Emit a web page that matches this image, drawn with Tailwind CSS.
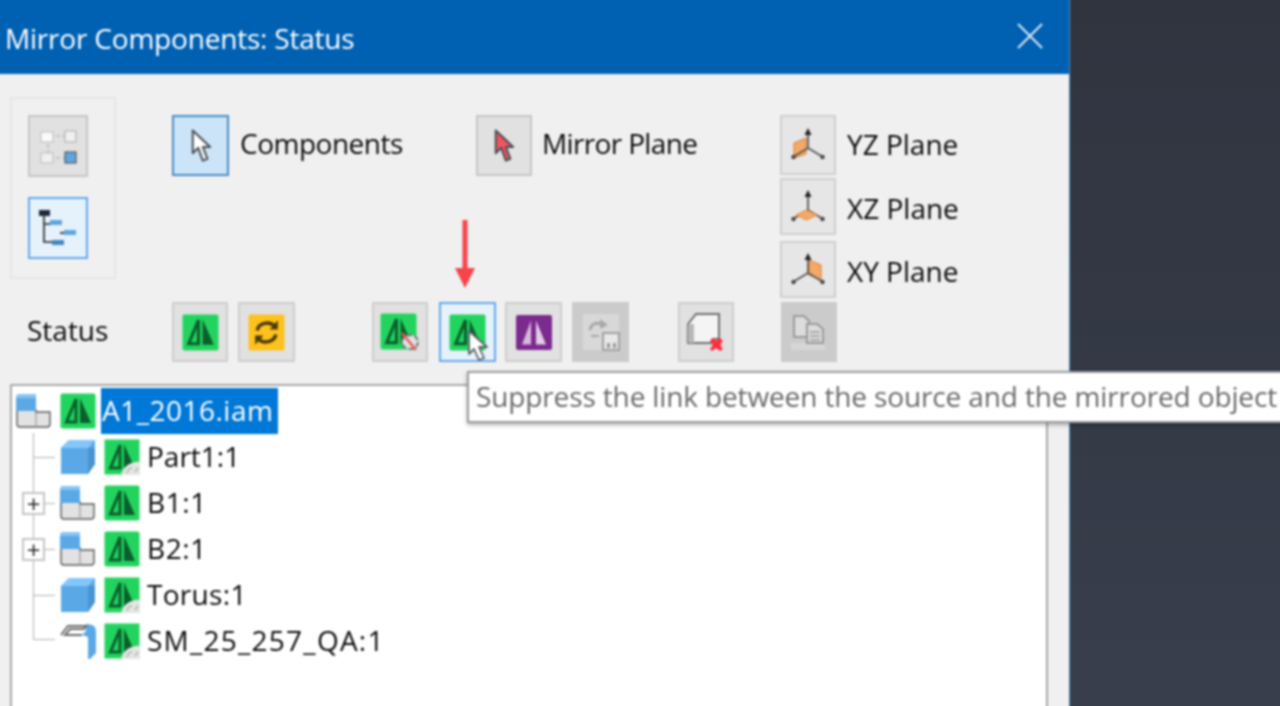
<!DOCTYPE html>
<html lang="en">
  <head>
    <meta charset="UTF-8" />
    <meta name="viewport" content="width=device-width, initial-scale=1.0" />
    <title>Mirror Components: Status</title>
    <script src="https://cdn.jsdelivr.net/npm/@tailwindcss/browser@4"></script>
  </head>
  <body class="bg-linear-to-b from-[#30343f] to-[#383e4c] h-[706px] overflow-hidden font-['Open_Sans',sans-serif]">
    <!-- shared icons -->
    <svg class="hidden">
      <symbol id="mirror" viewBox="0 0 36 36">
        <rect x="0.5" y="0.5" width="35" height="35" rx="2" fill="#22d45e" />
        <path d="M16 6V29H6.5Z" fill="none" stroke="#0b5f2d" stroke-width="3" />
        <path d="M20 5V30H31Z" fill="#0b5f2d" />
      </symbol>
      <symbol id="mirror-link" viewBox="0 0 36 36">
        <rect x="0.5" y="0.5" width="35" height="35" fill="#22d45e" />
        <path d="M16 6V29H6.5Z" fill="none" stroke="#0b5f2d" stroke-width="3" />
        <path d="M20 5V30H31Z" fill="#0b5f2d" />
        <path d="M17 36C19 27 28 22 36 23V36Z" fill="#e3e6e3" />
        <path d="M23 34c1-4 3-5 5-5M31 33l3-4" fill="none" stroke="#b5b5b5" stroke-width="1.6" />
      </symbol>
      <symbol id="assembly" viewBox="0 0 36 36">
        <path d="M1 17H20V19H34V31Q34 34 31 34H4Q1 34 1 31Z" fill="#e2e2e2" stroke="#5a5a5a" stroke-width="1.4" />
        <path d="M20 19V34" stroke="#9a9a9a" stroke-width="1.2" />
        <path d="M0 5Q0 1 4 1H20V18H0Z" fill="#5aa9e6" />
        <path d="M0 5Q0 1 4 1H20V5H0Z" fill="#86c5f5" />
      </symbol>
      <symbol id="part" viewBox="0 0 36 36">
        <path d="M9 1H35V25L28 35H1V9Z" fill="#5aa9e6" />
        <path d="M9 1H35L28 9H1Z" fill="#85c6fa" />
        <path d="M28 9H35V25L28 35Z" fill="#4a93cf" />
      </symbol>
      <symbol id="axes" viewBox="0 0 36 36">
        <path d="M18 21V3M18 21L3 30M18 21L33 30" fill="none" stroke="#555" stroke-width="1.8" />
        <path d="M18 1L14.5 8H21.5Z" fill="#222" />
        <circle cx="3.5" cy="30" r="2.2" fill="#444" />
        <circle cx="32.5" cy="30" r="2.2" fill="#444" />
      </symbol>
    </svg>

    <!-- dialog runs past the window edge so the blur doesn't fade there -->
    <div class="relative -ml-[4px] -mt-[4px] pl-[4px] pt-[4px] w-[1074px] h-[714px] bg-[#f0f0f0] border-r border-[#4b8fca] blur-[0.8px]">
      <header class="-ml-[4px] -mt-[4px] h-[78px] pt-[4px] bg-[#0061b2] flex items-center justify-between pl-[9px] pr-[26px]">
        <h1 class="text-white text-[28px] tracking-[-0.2px] mt-[2px]">Mirror Components: Status</h1>
        <svg width="26" height="26" viewBox="0 0 26 26" class="-mt-[2px]">
          <path d="M1 1L25 25M25 1L1 25" stroke="#dbe8f4" stroke-width="2" />
        </svg>
      </header>

      <div class="flex pl-[10px] pt-[23px]">
        <div class="w-[106px] h-[182px] border-2 border-[#e6e6e6] flex flex-col gap-[20px] pl-[16px] pt-[16px]">
          <button class="w-[60px] h-[62px] bg-[#e1e1e1] border-2 border-[#c6c6c6] flex items-center justify-center">
            <svg width="40" height="40" viewBox="0 0 40 40">
              <path d="M12 10H30M10 12V30M12 32H28" stroke="#bdbdbd" stroke-width="1.6" stroke-dasharray="4 2" fill="none" />
              <rect x="3" y="6" width="12" height="10" fill="#fafafa" stroke="#bbb" />
              <rect x="27" y="5" width="11" height="11" fill="#f0f0f0" stroke="#aaa" />
              <rect x="3" y="27" width="12" height="10" fill="#f0f0f0" stroke="#bbb" />
              <rect x="27" y="26" width="11" height="11" fill="#5fa6e0" stroke="#444" />
            </svg>
          </button>
          <button class="w-[60px] h-[62px] bg-[#e5f1fb] border-2 border-[#63a9ec] flex items-center justify-center">
            <svg width="40" height="40" viewBox="0 0 40 40">
              <path d="M6 6V34H14M6 16H14" stroke="#222" stroke-width="1.6" fill="none" />
              <path d="M22 25H26" stroke="#222" stroke-width="1.6" />
              <rect x="1" y="2" width="11" height="6" fill="#1d2b3a" />
              <rect x="12" y="12" width="12" height="5" fill="#5fa6e0" />
              <rect x="26" y="22" width="12" height="5" fill="#5fa6e0" />
              <rect x="14" y="32" width="12" height="5" fill="#3f88c5" />
            </svg>
          </button>
        </div>

        <div class="w-[304px] ml-[56px] mt-[18px] flex items-start gap-[11px]">
          <button class="w-[57px] h-[61px] bg-[#cce4f7] border-2 border-[#4a8dc4] flex items-center justify-center">
            <svg width="22" height="36" viewBox="0 0 24 38">
              <path d="M3 2V27L9 21L14 35L19 33L14 20H22Z" fill="#fff" stroke="#4a5058" stroke-width="2.2" stroke-linejoin="round" />
            </svg>
          </button>
          <span class="text-[28px] leading-[56px] text-[#0a0a0a] tracking-[-0.5px]">Components</span>
        </div>

        <div class="w-[304px] mt-[18px] flex items-start gap-[10px]">
          <button class="w-[56px] h-[61px] bg-[#e1e1e1] border-2 border-[#c6c6c6] flex items-center justify-center">
            <svg width="22" height="36" viewBox="0 0 24 38">
              <path d="M3 2V27L9 21L14 35L19 33L14 20H22Z" fill="#f2545f" stroke="#4a5058" stroke-width="2.2" stroke-linejoin="round" />
            </svg>
          </button>
          <span class="text-[28px] leading-[56px] text-[#0a0a0a] tracking-[-0.65px]">Mirror Plane</span>
        </div>

        <div class="mt-[18px] flex flex-col">
          <div class="flex items-center gap-[11px]">
            <button class="relative w-[56px] h-[60px] bg-[#e6e6e6] border-2 border-[#cfcfcf] flex items-center justify-center">
              <svg class="absolute left-[11px] top-[20px]" width="14" height="22" viewBox="0 0 14 22"><path d="M1 6L13 1V17L1 21Z" fill="#f6a868" stroke="#d9802f" /></svg>
              <svg class="relative" width="36" height="36"><use href="#axes" /></svg>
            </button>
            <span class="text-[28px] text-[#0a0a0a] -mt-[3px]">YZ Plane</span>
          </div>
          <div class="flex items-center gap-[11px] mt-[3px]">
            <button class="relative w-[56px] h-[57px] bg-[#e6e6e6] border-2 border-[#cfcfcf] flex items-center justify-center">
              <svg class="relative" width="36" height="36"><use href="#axes" /></svg>
              <svg class="absolute left-[13px] top-[29px]" width="23" height="12" viewBox="0 0 23 12"><path d="M11.5 1L22 6L11.5 11L1 6Z" fill="#f6a868" stroke="#e48a3a" /></svg>
            </button>
            <span class="text-[28px] text-[#0a0a0a] mt-[2px]">XZ Plane</span>
          </div>
          <div class="flex items-center gap-[11px] mt-[6px]">
            <button class="relative w-[56px] h-[57px] bg-[#e6e6e6] border-2 border-[#cfcfcf] flex items-center justify-center">
              <svg class="absolute left-[26px] top-[16px]" width="14" height="22" viewBox="0 0 14 22"><path d="M1 1L13 6V21L1 16Z" fill="#f6a868" stroke="#d9802f" /></svg>
              <svg class="relative" width="36" height="36"><use href="#axes" /></svg>
            </button>
            <span class="text-[28px] text-[#0a0a0a] mt-[2px]">XY Plane</span>
          </div>
        </div>
      </div>

      <div class="flex items-center pl-[27px] mt-[4px] h-[60px]">
        <span class="w-[145px] text-[28px] text-[#0a0a0a] -mt-[4px]">Status</span>
        <button class="w-[56px] h-[60px] bg-[#e1e1e1] border-2 border-[#cdcdcd] flex items-center justify-center">
          <svg width="37" height="37"><use href="#mirror" /></svg>
        </button>
        <button class="ml-[10px] w-[57px] h-[60px] bg-[#e1e1e1] border-2 border-[#cdcdcd] flex items-center justify-center">
          <svg width="37" height="37" viewBox="0 0 36 36">
            <rect x="0.5" y="0.5" width="35" height="35" rx="2" fill="#fdc21e" />
            <path d="M9 16C10 9 21 6 26 12M27 20C26 27 15 30 10 24" fill="none" stroke="#4a3a08" stroke-width="3.4" />
            <path d="M29 6V15H21ZM7 30V21H15Z" fill="#4a3a08" />
          </svg>
        </button>
        <button class="ml-[77px] w-[56px] h-[60px] bg-[#e1e1e1] border-2 border-[#cdcdcd] flex items-center justify-center">
          <svg width="40" height="38" viewBox="0 0 40 38">
            <use href="#mirror" width="37" height="37" />
            <ellipse cx="30" cy="29" rx="8" ry="7" fill="#e1e1e1" stroke="#777" stroke-width="2" stroke-dasharray="5 3" />
            <path d="M22 20L36 37" stroke="#ea5a62" stroke-width="2.4" />
          </svg>
        </button>
        <button class="relative ml-[11px] w-[57px] h-[60px] bg-[#e5f1fb] border-2 border-[#63a9ec] flex items-center justify-center">
          <svg width="37" height="37"><use href="#mirror" /></svg>
          <svg class="absolute left-[25px] top-[25px]" width="24" height="34" viewBox="0 0 24 34">
            <path d="M3 2V25L8 20L13 31L18 29L13 18H21Z" fill="#fff" stroke="#5a5e64" stroke-width="1.8" stroke-linejoin="round" />
          </svg>
        </button>
        <button class="ml-[9px] w-[57px] h-[60px] bg-[#e1e1e1] border-2 border-[#cdcdcd] flex items-center justify-center">
          <svg width="38" height="37" viewBox="0 0 38 36">
            <rect x="1" y="0.5" width="36" height="35" rx="2" fill="#7b2a8e" />
            <path d="M16 6V30H7Z" fill="#d9b8de" />
            <path d="M21 6V30H31Z" fill="#e4cde8" />
          </svg>
        </button>
        <button class="ml-[10px] w-[57px] h-[60px] bg-[#cbcbcb] flex items-center justify-center">
          <svg width="38" height="38" viewBox="0 0 38 38">
            <rect x="1" y="1" width="36" height="36" fill="#d8d8d8" />
            <path d="M8 17C9 11 14 9 19 11" fill="none" stroke="#a8a8a8" stroke-width="3" />
            <path d="M18 6L26 12L18 16Z" fill="#a8a8a8" />
            <path d="M9 23H17" stroke="#a8a8a8" stroke-width="2" />
            <rect x="21" y="20" width="16" height="17" fill="#e8e8e8" stroke="#a0a0a0" stroke-width="2" />
            <rect x="25" y="30" width="3" height="5" fill="#999" />
            <rect x="31" y="30" width="3" height="5" fill="#999" />
          </svg>
        </button>
        <button class="ml-[49px] w-[56px] h-[60px] bg-[#e1e1e1] border-2 border-[#cdcdcd] flex items-center justify-center">
          <svg width="40" height="40" viewBox="0 0 40 40">
            <path d="M2 12L10 2H33V27H28V31H2Z" fill="#f4f4f4" stroke="#6e6e6e" stroke-width="2" />
            <path d="M2 12V31H8V12Z" fill="#b8b8b8" />
            <path d="M26 26L30 29L34 26L37 29L34 33L37 37L34 39L30 36L26 39L24 37L27 33L24 29Z" fill="#ff2b3a" />
          </svg>
        </button>
        <button class="ml-[47px] w-[56px] h-[60px] bg-[#cbcbcb] flex items-center justify-center">
          <svg width="38" height="38" viewBox="0 0 38 38">
            <rect x="1" y="30" width="34" height="7" fill="#d6d6d6" />
            <path d="M4 3H14L19 8V24H4Z" fill="#dcdcdc" stroke="#9a9a9a" stroke-width="2" />
            <path d="M17 11H27L33 16V30H17Z" fill="#dcdcdc" stroke="#9a9a9a" stroke-width="2" />
            <path d="M20 19H30M20 23H30M20 27H30" stroke="#9a9a9a" stroke-width="1.4" />
          </svg>
        </button>
      </div>

      <!-- tree -->
      <div class="relative mt-[22px] ml-[10px] w-[1038px] h-[334px] bg-white border-l-2 border-t-2 border-r-2 border-[#a8a8a8] pt-[2px]">
        <span class="absolute left-[21px] top-[47px] w-[1px] h-[206px] bg-[#b0b0b0]"></span>

        <div class="flex items-center h-[46px] pl-[4px]">
          <svg width="36" height="36"><use href="#assembly" /></svg>
          <svg class="ml-[8px]" width="36" height="36"><use href="#mirror" /></svg>
          <span class="ml-[5px] h-[46px] leading-[44px] w-[177px] pl-[1px] bg-[#0078d7] text-white text-[28px] tracking-[0.5px]">A1_2016.iam</span>
        </div>
        <div class="relative flex items-center h-[46px] pl-[48px]">
          <span class="absolute left-[21px] top-[23px] w-[22px] h-[1px] bg-[#b0b0b0]"></span>
          <svg width="36" height="36"><use href="#part" /></svg>
          <svg class="ml-[8px]" width="36" height="36"><use href="#mirror-link" /></svg>
          <span class="ml-[7px] -mt-[2px] text-[28px] text-[#0a0a0a]">Part1:1</span>
        </div>
        <div class="relative flex items-center h-[46px] pl-[48px]">
          <span class="absolute left-[21px] top-[23px] w-[22px] h-[1px] bg-[#b0b0b0]"></span>
          <span class="absolute left-[10px] top-[12px] w-[23px] h-[23px] bg-white border-2 border-[#c4c4c4] flex items-center justify-center text-[#222] text-[24px] leading-none">+</span>
          <svg width="36" height="36"><use href="#assembly" /></svg>
          <svg class="ml-[8px]" width="36" height="36"><use href="#mirror" /></svg>
          <span class="ml-[7px] -mt-[2px] text-[28px] text-[#0a0a0a] tracking-[0.6px]">B1:1</span>
        </div>
        <div class="relative flex items-center h-[46px] pl-[48px]">
          <span class="absolute left-[21px] top-[23px] w-[22px] h-[1px] bg-[#b0b0b0]"></span>
          <span class="absolute left-[10px] top-[12px] w-[23px] h-[23px] bg-white border-2 border-[#c4c4c4] flex items-center justify-center text-[#222] text-[24px] leading-none">+</span>
          <svg width="36" height="36"><use href="#assembly" /></svg>
          <svg class="ml-[8px]" width="36" height="36"><use href="#mirror" /></svg>
          <span class="ml-[7px] -mt-[2px] text-[28px] text-[#0a0a0a] tracking-[0.6px]">B2:1</span>
        </div>
        <div class="relative flex items-center h-[46px] pl-[48px]">
          <span class="absolute left-[21px] top-[23px] w-[22px] h-[1px] bg-[#b0b0b0]"></span>
          <svg width="36" height="36"><use href="#part" /></svg>
          <svg class="ml-[8px]" width="36" height="36"><use href="#mirror-link" /></svg>
          <span class="ml-[7px] -mt-[2px] text-[28px] text-[#0a0a0a] tracking-[0.3px]">Torus:1</span>
        </div>
        <div class="relative flex items-center h-[46px] pl-[48px]">
          <span class="absolute left-[21px] top-[21px] w-[22px] h-[1px] bg-[#b0b0b0]"></span>
          <svg width="36" height="36" viewBox="0 0 36 36">
            <path d="M26 1Q36 1 36 8V30L28 38V14L22 12L26 8Z" fill="#5aa9e6" />
            <path d="M1 12L8 3H26L24 6H10L5 12H22" fill="none" stroke="#6a6a6a" stroke-width="2" />
          </svg>
          <svg class="ml-[8px]" width="36" height="36"><use href="#mirror-link" /></svg>
          <span class="ml-[7px] -mt-[2px] text-[28px] text-[#0a0a0a] tracking-[1.25px]">SM_25_257_QA:1</span>
        </div>
      </div>
    </div>

    <!-- annotation arrow -->
    <svg class="absolute left-[452px] top-[218px] blur-[0.8px]" width="28" height="72" viewBox="0 0 28 72">
      <path d="M13 2V52" stroke="#f8434a" stroke-width="5" />
      <path d="M3 50H23L13 70Z" fill="#f8434a" />
    </svg>

    <!-- tooltip -->
    <div class="absolute left-[467px] top-[371px] w-[817px] h-[52px] bg-white border-t-2 border-l-2 border-b-2 border-[#9c9c9c] shadow-[0_2px_4px_rgba(0,0,0,0.3)] pl-[7px] leading-[46px] text-[28px] tracking-[-0.13px] text-[#6a6a6a] whitespace-nowrap blur-[0.8px]">Suppress the link between the source and the mirrored object</div>
  </body>
</html>
